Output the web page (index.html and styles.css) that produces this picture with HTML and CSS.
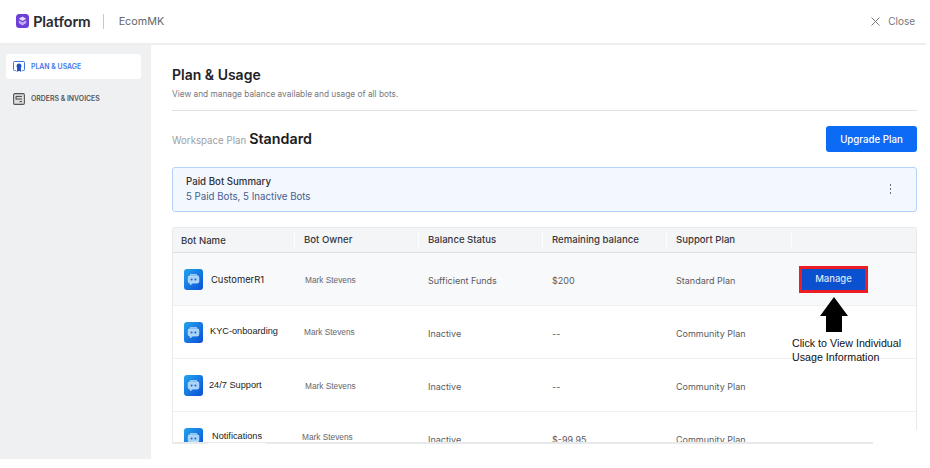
FILE: index.html
```html
<!DOCTYPE html>
<html lang="en">
  <head>
    <meta charset="UTF-8" />
    <title>Plan &amp; Usage</title>
    <link rel="stylesheet" href="styles.css">
  </head>
  <body>
    <div class="app">
      <header class="topbar">
        <div class="brand">
          <svg class="brand-logo" width="13" height="14" viewBox="0 0 14 14" preserveAspectRatio="none">
            <rect width="14" height="14" rx="3.5" fill="#6d3fd8" />
            <path d="M7 2.6 11 4.8 7 7 3 4.8Z" fill="#e6dcfa" />
            <path d="M3 6.3 7 8.5 11 6.3V9L7 11.4 3 9Z" fill="#c4aff0" />
          </svg>
          <span class="brand-name">Platform</span>
          <span class="brand-sep"></span>
          <span class="brand-ws">EcomMK</span>
        </div>
        <div class="close">
          <svg width="9" height="9" viewBox="0 0 9 9">
            <path d="M.5.5l8 8M8.5.5l-8 8" stroke="#777" stroke-width="1" fill="none" />
          </svg>
          <span>Close</span>
        </div>
      </header>
      <div class="body-wrap">
        <nav class="sidebar">
          <a class="nav-item active">
            <svg width="12" height="13" viewBox="0 0 13 13" preserveAspectRatio="none">
              <path d="M3 10.5H1.5a1 1 0 0 1-1-1v-7a1 1 0 0 1 1-1h10a1 1 0 0 1 1 1v7a1 1 0 0 1-1 1H10" stroke="#2f6fe4" stroke-width="1" fill="none" />
              <circle cx="6.5" cy="6" r="2.6" fill="#1f4fc0" />
              <path d="M4.6 8 4 12l2.5-1.2L9 12l-.6-4Z" fill="#1f4fc0" />
            </svg>
            <span>PLAN &amp; USAGE</span>
          </a>
          <a class="nav-item">
            <svg width="12" height="12" viewBox="0 0 12 12">
              <rect x=".6" y=".6" width="10.8" height="10.8" rx="1.4" stroke="#555" stroke-width="1.1" fill="#ddd" />
              <path d="M3 3.4h6M3 6h6M6.5 8.6H9M3 3.4v3" stroke="#444" stroke-width="1" fill="none" />
            </svg>
            <span>ORDERS &amp; INVOICES</span>
          </a>
        </nav>
        <main class="content">
          <h1>Plan &amp; Usage</h1>
          <p class="subtitle">View and manage balance available and usage of all bots.</p>
          <div class="plan-row">
            <div class="plan-name">
              <span class="plan-label">Workspace Plan</span>
              <strong>Standard</strong>
            </div>
            <button class="btn-upgrade">Upgrade Plan</button>
          </div>
          <section class="summary">
            <div>
              <div class="summary-title">Paid Bot Summary</div>
              <div class="summary-text">5 Paid Bots, 5 Inactive Bots</div>
            </div>
            <div class="kebab"><i></i><i></i><i></i></div>
          </section>
          <section class="table">
            <div class="row head">
              <div class="cell">Bot Name</div>
              <div class="cell sep">Bot Owner</div>
              <div class="cell sep">Balance Status</div>
              <div class="cell sep">Remaining balance</div>
              <div class="cell sep">Support Plan</div>
              <div class="cell sep"></div>
            </div>
            <div class="row hl">
              <div class="cell bot">
                <svg class="bot-icon"><use href="#bot" /></svg>
                <span class="bot-name n1">CustomerR1</span>
              </div>
              <div class="cell owner o1">Mark Stevens</div>
              <div class="cell">Sufficient Funds</div>
              <div class="cell">$200</div>
              <div class="cell">Standard Plan</div>
              <div class="cell manage-cell"><button class="btn-manage">Manage</button></div>
            </div>
            <div class="row">
              <div class="cell bot">
                <svg class="bot-icon"><use href="#bot" /></svg>
                <span class="bot-name n2">KYC-onboarding</span>
              </div>
              <div class="cell owner o2">Mark Stevens</div>
              <div class="cell">Inactive</div>
              <div class="cell">--</div>
              <div class="cell">Community Plan</div>
              <div class="cell"></div>
            </div>
            <div class="row">
              <div class="cell bot">
                <svg class="bot-icon"><use href="#bot" /></svg>
                <span class="bot-name n3">24/7 Support</span>
              </div>
              <div class="cell owner o1">Mark Stevens</div>
              <div class="cell">Inactive</div>
              <div class="cell">--</div>
              <div class="cell">Community Plan</div>
              <div class="cell"></div>
            </div>
            <div class="row">
              <div class="cell bot">
                <svg class="bot-icon"><use href="#bot" /></svg>
                <span class="bot-name n4">Notifications</span>
              </div>
              <div class="cell owner o4">Mark Stevens</div>
              <div class="cell">Inactive</div>
              <div class="cell">$-99.95</div>
              <div class="cell">Community Plan</div>
              <div class="cell"></div>
            </div>
          </section>
        </main>
      </div>

      <!-- annotation pasted over the screenshot -->
      <div class="patch patch-name"></div>
      <div class="patch patch-corner"></div>
      <svg class="note-arrow" width="28" height="36" viewBox="0 0 28 36">
        <path d="M14 0 28 19H22V35H6V19H0Z" fill="#000" />
      </svg>
      <div class="note">Click to View Individual<br />Usage Information</div>
    </div>

    <svg width="0" height="0" class="defs">
      <defs>
        <linearGradient id="botBg" x1="0" y1="0" x2="1" y2="1">
          <stop offset="0" stop-color="#22a3ee" />
          <stop offset="1" stop-color="#0b4fd6" />
        </linearGradient>
        <symbol id="bot" viewBox="0 0 19 21">
          <rect width="19" height="21" rx="3" fill="url(#botBg)" />
          <path d="M6 5.5h7M4.2 8.4a1.6 1.6 0 0 1 1.6-1.6h7.4a1.6 1.6 0 0 1 1.6 1.6v4a1.6 1.6 0 0 1-1.6 1.6H8.4L6.4 16v-2h-.6a1.6 1.6 0 0 1-1.6-1.6Z" fill="#a9d4f8" stroke="#cfe6fb" stroke-width=".7" />
          <circle cx="7.6" cy="10.4" r="1" fill="#1c64d8" />
          <circle cx="11.4" cy="10.4" r="1" fill="#1c64d8" />
        </symbol>
      </defs>
    </svg>
  </body>
</html>
```

FILE: styles.css
```css
* {
  box-sizing: border-box;
}
html,
body {
  margin: 0;
  height: 100%;
  overflow: hidden;
  background: #fff;
}
body {
  font-family: Inter, "Liberation Sans", sans-serif;
  color: #222;
}
.defs {
  position: absolute;
}
.app {
  position: relative;
  width: 926px;
  height: 459px;
  display: flex;
  flex-direction: column;
}

/* Top bar */
.topbar {
  height: 45px;
  flex: none;
  display: flex;
  align-items: center;
  justify-content: space-between;
  padding: 0 11px 1px 16px;
  border-bottom: 2px solid #eeeeef;
}
.brand {
  display: flex;
  align-items: center;
}
.brand-logo {
  margin-right: 4px;
}
.brand-name {
  font-family: Lato, Inter, sans-serif;
  font-size: 15px;
  font-weight: 700;
  color: #2c2c30;
}
.brand-sep {
  width: 1px;
  height: 15px;
  margin: 0 15px 0 12px;
  background: #c9c9cc;
}
.brand-ws {
  font-size: 10.8px;
  color: #66666a;
}
.close {
  display: flex;
  align-items: center;
  gap: 8px;
  font-size: 10px;
  color: #777;
}

/* Sidebar */
.body-wrap {
  flex: 1;
  display: flex;
  min-height: 0;
}
.sidebar {
  width: 151px;
  flex: none;
  background: #eff0f2;
  padding: 9px 10px 0 6px;
}
.nav-item {
  height: 25px;
  margin-bottom: 7px;
  display: flex;
  align-items: center;
  gap: 6px;
  padding-left: 7px;
  border-radius: 3px;
  font-size: 6.9px;
  font-weight: 600;
  color: #55555a;
}
.nav-item.active {
  background: #fff;
  color: #3b78ee;
}

/* Content */
.content {
  flex: 1;
  min-width: 0;
  padding: 21px 9px 0 21px;
}
h1 {
  margin: 0;
  font-size: 14px;
  line-height: 17px;
  font-weight: 600;
  color: #222226;
}
.subtitle {
  margin: 5px 0 0;
  padding-bottom: 10px;
  border-bottom: 1px solid #e2e2e4;
  font-size: 8.3px;
  line-height: 12px;
  color: #77777c;
}
.plan-row {
  display: flex;
  align-items: center;
  justify-content: space-between;
  margin-top: 15px;
}
.plan-name {
  display: flex;
  align-items: baseline;
  gap: 3px;
  padding-bottom: 2px;
}
.plan-label {
  font-size: 9.7px;
  color: #a0a0a5;
}
.plan-name strong {
  font-size: 14.3px;
  font-weight: 600;
  color: #1c1c20;
}
.btn-upgrade {
  width: 91px;
  height: 26px;
  border: 0;
  border-radius: 3px;
  background: #0b6bf5;
  color: #fff;
  font: 500 9.7px Inter, sans-serif;
}
.summary {
  height: 45px;
  margin-top: 15px;
  display: flex;
  align-items: center;
  justify-content: space-between;
  padding: 0 25px 1px 13px;
  background: #f3f7fe;
  border: 1px solid #b5d2f8;
  border-radius: 3px;
}
.summary-title {
  font-size: 9.7px;
  line-height: 15px;
  font-weight: 500;
  color: #303035;
}
.summary-text {
  font-size: 9.7px;
  line-height: 16px;
  color: #46608e;
}
.kebab {
  display: flex;
  flex-direction: column;
  gap: 2px;
}
.kebab i {
  width: 1.5px;
  height: 2px;
  background: #6a707c;
}

/* Table */
.table {
  height: 217px;
  margin-top: 15px;
  overflow: hidden;
  border: 1px solid #e8e9eb;
  border-bottom-width: 2px;
  border-radius: 3px 3px 0 0;
}
.row {
  height: 53px;
  display: grid;
  grid-template-columns: 121px 124px 124px 124px 125px 124px;
  align-items: center;
  border-bottom: 1px solid #f0f0f2;
  font-size: 9px;
  color: #5a5a60;
}
.row.head {
  height: 25px;
  background: #f4f5f7;
  border-bottom: 1px solid #dfe0e3;
  font-size: 9.6px;
  font-weight: 500;
  color: #37373c;
}
.row.hl {
  background: #f8f9fb;
}
.cell {
  padding: 2px 0 0 10px;
}
.row.head .cell {
  padding: 0 0 0 9px;
}
.row.head .cell:first-child {
  padding-left: 8px;
}
.cell.sep {
  border-left: 1px solid #fff;
  height: 14px;
  line-height: 14px;
}
.cell.bot {
  display: flex;
  align-items: center;
  padding: 0 0 0 11px;
}
.bot-icon {
  width: 19px;
  height: 21px;
  flex: none;
}
.bot-name {
  font-family: "Liberation Sans", sans-serif;
  font-size: 9.2px;
  color: #222;
}
.n1 {
  margin-left: 8px;
  font-family: Inter, sans-serif;
  font-size: 9.4px;
}
.n2 {
  margin: -2px 0 0 7px;
}
.n3 {
  margin: -1px 0 0 6px;
}
.n4 {
  margin: -4px 0 0 9px;
}
.owner {
  font-family: "Liberation Sans", sans-serif;
  font-size: 8.3px;
  color: #66666b;
}
.o1 {
  padding-left: 11px;
}
.o2 {
  padding-left: 10px;
  margin-top: -2px;
}
.o4 {
  padding-left: 8px;
  margin-top: -5px;
}
.manage-cell {
  padding: 0 0 0 8px;
}
.btn-manage {
  width: 69px;
  height: 27px;
  display: block;
  border: 3px solid #ee1c25;
  background: #0a50cf;
  color: #dbe7fb;
  font: 500 9.5px Inter, sans-serif;
  padding: 0 0 2px;
}

/* Annotation */
.patch {
  position: absolute;
  background: #fff;
}
.patch-name {
  left: 208px;
  top: 443px;
  width: 58px;
  height: 2px;
}
.patch-corner {
  left: 873px;
  top: 430px;
  width: 53px;
  height: 29px;
}
.note-arrow {
  position: absolute;
  left: 820px;
  top: 297px;
}
.note {
  position: absolute;
  left: 792px;
  top: 336px;
  font-family: "Liberation Sans", sans-serif;
  font-size: 10.7px;
  line-height: 14px;
  color: #111;
}
```
